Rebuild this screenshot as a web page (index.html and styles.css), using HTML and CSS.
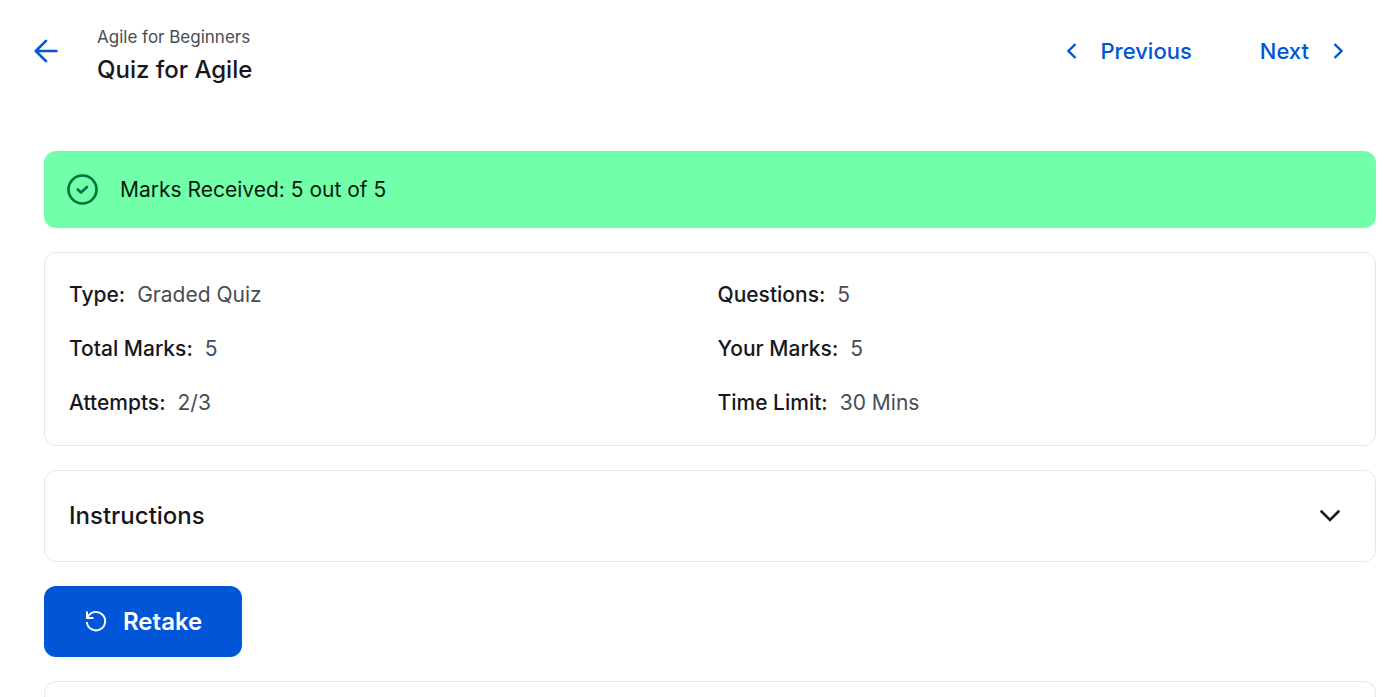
FILE: index.html
```html
<!DOCTYPE html>
<html lang="en">
<head>
<meta charset="utf-8">
<meta name="viewport" content="width=device-width, initial-scale=1">
<title>Quiz for Agile</title>
<link rel="stylesheet" href="styles.css">
</head>
<body>
<header class="topbar">
  <a class="back" href="#" aria-label="Back">
    <svg width="24" height="24" viewBox="0 0 24 24"><path d="M22.500 12H2M12 1.800L1.800 12 12 22.200" stroke-linecap="round" stroke-linejoin="round"/></svg>
  </a>
  <div class="heading">
    <p class="course">Agile for Beginners</p>
    <h1 class="title">Quiz for Agile</h1>
  </div>
  <nav class="pager">
    <a class="pager-link" href="#">
      <svg width="10" height="16" viewBox="0 0 10 16"><path d="M8.500 1L1.500 8l7 7"/></svg>
      Previous
    </a>
    <a class="pager-link" href="#">
      Next
      <svg width="10" height="16" viewBox="0 0 10 16"><path d="M1.500 1l7 7-7 7"/></svg>
    </a>
  </nav>
</header>
<main class="content">
  <div class="banner" role="status">
    <svg width="33" height="31" viewBox="0 0 33 31"><circle cx="16.500" cy="15.500" r="14"/><path d="M11.800 15.500l3.200 3 6-5.500" stroke-linecap="round" stroke-linejoin="round"/></svg>
    <span>Marks Received: 5 out of 5</span>
  </div>
  <dl class="card details">
    <div class="detail"><dt>Type:</dt><dd>Graded Quiz</dd></div>
    <div class="detail"><dt>Questions:</dt><dd>5</dd></div>
    <div class="detail"><dt>Total Marks:</dt><dd>5</dd></div>
    <div class="detail"><dt>Your Marks:</dt><dd>5</dd></div>
    <div class="detail"><dt>Attempts:</dt><dd>2/3</dd></div>
    <div class="detail"><dt>Time Limit:</dt><dd>30 Mins</dd></div>
  </dl>
  <button class="card instructions" type="button" aria-expanded="false">
    Instructions
    <svg width="22" height="14" viewBox="0 0 22 14"><path d="M2.500 2.500l8.500 8.500 8.500-8.500" stroke-linecap="round"/></svg>
  </button>
  <button class="retake" type="button">
    <svg width="24" height="24" viewBox="0 0 24 24"><path d="M3 1.500V8h6.500M3.500 7.500A9.200 9.200 0 1 1 2.800 12"/></svg>
    Retake
  </button>
  <section class="card results" aria-label="Results"></section>
</main>
</body>
</html>
```

FILE: styles.css
```css
* { box-sizing: border-box; }
body {
  margin: 0;
  height: 100vh;
  display: flex;
  flex-direction: column;
  background: #fff;
  color: #16181d;
  font-family: Inter, sans-serif;
  font-size: 21px;
  line-height: 30px;
}
svg { flex: none; fill: none; stroke: currentColor; stroke-width: 2; }
a { color: #0056d6; text-decoration: none; }
button { font: inherit; color: inherit; cursor: pointer; }
.topbar {
  display: flex;
  align-items: center;
  padding: 14px 56px 0 34px;
}
.back { display: flex; margin-right: 39px; }
.back svg { stroke-width: 2.6; }
.heading { flex: 1; padding-top: 7px; }
.course { margin: 0; font-size: 17px; line-height: 32px; color: #494c53; }
.title { margin: 0; font-size: 24px; line-height: 34px; font-weight: 500; }
.pager { display: flex; gap: 68px; font-size: 22px; }
.pager svg { stroke-width: 2.4; }
.pager-link { display: flex; align-items: center; gap: 24px; font-weight: 500; }
.content {
  flex: 1;
  display: flex;
  flex-direction: column;
  gap: 24px;
  padding: 64px 23px 0 44px;
}
.banner {
  display: flex;
  align-items: center;
  gap: 21px;
  padding: 23px 22px;
  border-radius: 12px;
  background: #72ffa9;
  color: #07190f;
}
.banner svg { color: #007040; stroke-width: 2.6; }
.card {
  margin: 0;
  border: 1px solid #e6e7ea;
  border-radius: 12px;
  background: #fff;
}
.details {
  display: grid;
  grid-template-columns: 1fr 1fr;
  gap: 24px 15px;
  padding: 27px 24px;
}
.detail { display: flex; gap: 12px; }
.detail dt { font-weight: 500; }
.detail dd { margin: 0; color: #494c53; }
.instructions {
  display: flex;
  align-items: center;
  justify-content: space-between;
  padding: 27px 34px 27px 24px;
  font-size: 24px;
  line-height: 36px;
  font-weight: 500;
}
.instructions svg { stroke-width: 2.6; }
.retake {
  align-self: flex-start;
  display: flex;
  align-items: center;
  gap: 15px;
  padding: 18px 40px 17px 40px;
  border: 0;
  border-radius: 12px;
  background: #0056d6;
  color: #fff;
  font-size: 24px;
  line-height: 36px;
  font-weight: 600;
}
.results { flex: 1; border-bottom: 0; border-radius: 12px 12px 0 0; }
```
